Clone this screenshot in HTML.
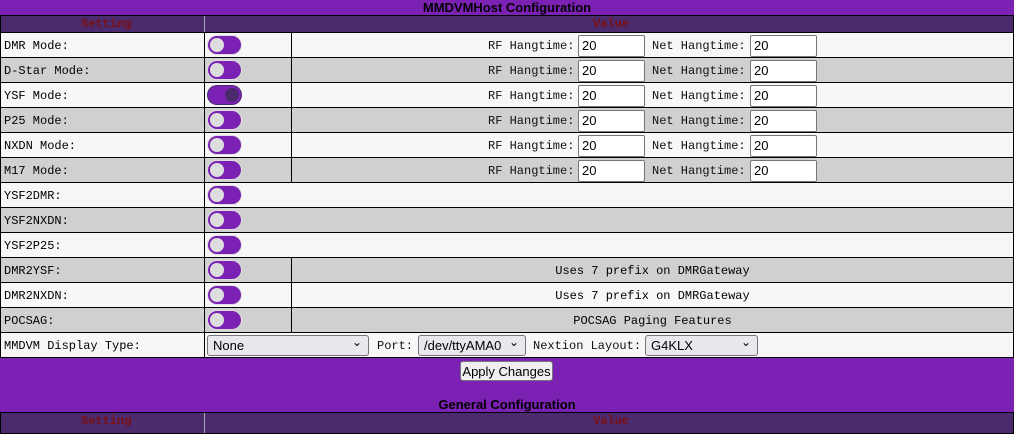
<html><head><style>
body{margin:0;width:1014px;height:424px;background:#7b22b4;overflow:hidden;position:relative;font-family:"Liberation Mono",monospace;font-size:12px;color:#000}
.t{position:absolute;left:0;width:1014px;text-align:center;font:bold 13px "Liberation Sans",sans-serif;color:#000}
.tbl{position:absolute;left:0;top:15px;width:1012px;border:1px solid #000;border-bottom:none;background:#000}
.h{height:16px;background:#4b2a6e;position:relative;border-bottom:1px solid #000;overflow:hidden}
.h span{position:absolute;top:1px;color:#7a1010;font-weight:bold;font-size:12px;line-height:14px}
.r{height:24px;border-bottom:1px solid #000;position:relative;background:#f7f7f7}
.r.g{background:#d0d0d0}
.c1{position:absolute;left:3px;top:1px;line-height:24px}
.v1{position:absolute;left:203px;top:0;width:1px;height:25px;background:#000}
.v2{position:absolute;left:290px;top:0;width:1px;height:25px;background:#000}
.tg{position:absolute;left:207px;top:3px;width:33px;height:18px;border-radius:10px;background:#7b22b4;box-shadow:0 0 0 1px #ddd}
.tg:before{content:"";position:absolute;left:2px;top:2px;width:14px;height:14px;border-radius:50%;background:#ddd}
.tg.on{background:#7b22b4;box-shadow:0 0 0 1px #4b2a6e}
.tg.on:before{left:auto;right:2px;background:#4b2a6e}
.lbl{position:absolute;top:1px;line-height:24px;color:#111}
.in{position:absolute;border:1px solid #767676;border-radius:2px;background:#fff;font:13px "Liberation Sans",sans-serif;line-height:20px;padding-left:3px;box-sizing:border-box;width:67px;height:22px;top:2px}
.ctr{position:absolute;top:1px;left:291px;width:721px;text-align:center;line-height:24px}
.sel{position:absolute;top:2px;height:21px;border:1px solid #767676;border-radius:3px;background:#e9e9ed;font:13px "Liberation Sans",sans-serif;line-height:19px;padding-left:5px;box-sizing:border-box}
.sel:after{content:"\2304";position:absolute;right:6px;top:-3px;font-size:12px}
.btn{position:absolute;left:460px;top:361px;width:93px;height:20px;border:1px solid #767676;border-radius:3px;background:#efeff2;font:13px "Liberation Sans",sans-serif;text-align:center;line-height:20px;box-sizing:border-box}
</style></head><body>
<div class="t" style="top:0">MMDVMHost Configuration</div>
<div class="tbl">
<div class="h"><span style="left:80px">Setting</span><span style="left:592px">Value</span><div style="position:absolute;left:203px;top:0;width:1px;height:16px;background:#aaa"></div></div>
<div class="r"><span class="c1">DMR Mode:</span><div class="v1"></div><div class="tg"></div><div class="v2"></div><span class="lbl" style="left:487px">RF Hangtime:</span><div class="in" style="left:577px">20</div><span class="lbl" style="left:651px">Net Hangtime:</span><div class="in" style="left:749px">20</div></div>
<div class="r g"><span class="c1">D-Star Mode:</span><div class="v1"></div><div class="tg"></div><div class="v2"></div><span class="lbl" style="left:487px">RF Hangtime:</span><div class="in" style="left:577px">20</div><span class="lbl" style="left:651px">Net Hangtime:</span><div class="in" style="left:749px">20</div></div>
<div class="r"><span class="c1">YSF Mode:</span><div class="v1"></div><div class="tg on"></div><div class="v2"></div><span class="lbl" style="left:487px">RF Hangtime:</span><div class="in" style="left:577px">20</div><span class="lbl" style="left:651px">Net Hangtime:</span><div class="in" style="left:749px">20</div></div>
<div class="r g"><span class="c1">P25 Mode:</span><div class="v1"></div><div class="tg"></div><div class="v2"></div><span class="lbl" style="left:487px">RF Hangtime:</span><div class="in" style="left:577px">20</div><span class="lbl" style="left:651px">Net Hangtime:</span><div class="in" style="left:749px">20</div></div>
<div class="r"><span class="c1">NXDN Mode:</span><div class="v1"></div><div class="tg"></div><div class="v2"></div><span class="lbl" style="left:487px">RF Hangtime:</span><div class="in" style="left:577px">20</div><span class="lbl" style="left:651px">Net Hangtime:</span><div class="in" style="left:749px">20</div></div>
<div class="r g"><span class="c1">M17 Mode:</span><div class="v1"></div><div class="tg"></div><div class="v2"></div><span class="lbl" style="left:487px">RF Hangtime:</span><div class="in" style="left:577px">20</div><span class="lbl" style="left:651px">Net Hangtime:</span><div class="in" style="left:749px">20</div></div>
<div class="r"><span class="c1">YSF2DMR:</span><div class="v1"></div><div class="tg"></div></div>
<div class="r g"><span class="c1">YSF2NXDN:</span><div class="v1"></div><div class="tg"></div></div>
<div class="r"><span class="c1">YSF2P25:</span><div class="v1"></div><div class="tg"></div></div>
<div class="r g"><span class="c1">DMR2YSF:</span><div class="v1"></div><div class="tg"></div><div class="v2"></div><span class="ctr">Uses 7 prefix on DMRGateway</span></div>
<div class="r"><span class="c1">DMR2NXDN:</span><div class="v1"></div><div class="tg"></div><div class="v2"></div><span class="ctr">Uses 7 prefix on DMRGateway</span></div>
<div class="r g"><span class="c1">POCSAG:</span><div class="v1"></div><div class="tg"></div><div class="v2"></div><span class="ctr">POCSAG Paging Features</span></div>
<div class="r"><span class="c1">MMDVM Display Type:</span><div class="v1"></div>
<div class="sel" style="left:206px;width:162px">None</div><span class="lbl" style="left:376px">Port:</span>
<div class="sel" style="left:417px;width:108px">/dev/ttyAMA0</div><span class="lbl" style="left:532px">Nextion Layout:</span>
<div class="sel" style="left:644px;width:113px">G4KLX</div></div>
</div>
<div class="btn">Apply Changes</div>
<div class="t" style="top:397px">General Configuration</div>
<div style="position:absolute;left:0;top:412px;width:1012px;height:20px;border:1px solid #000;background:#4b2a6e"><span style="position:absolute;left:80px;top:1px;color:#7a1010;font-weight:bold">Setting</span><span style="position:absolute;left:592px;top:1px;color:#7a1010;font-weight:bold">Value</span><div style="position:absolute;left:203px;top:0;width:1px;height:20px;background:#aaa"></div></div>
</body></html>
